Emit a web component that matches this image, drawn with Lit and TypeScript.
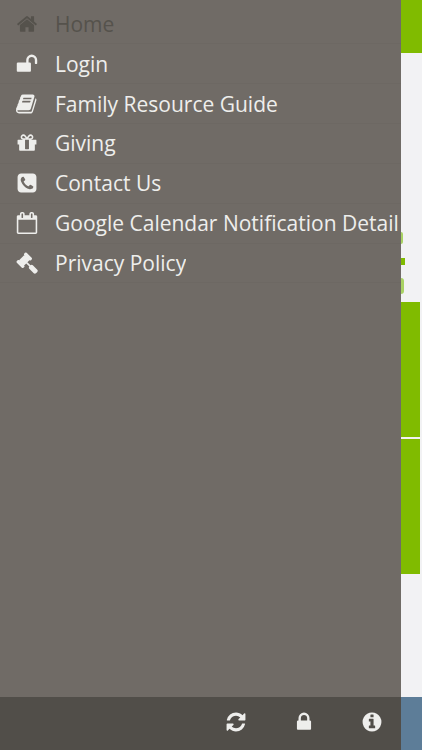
import { LitElement, html, css, svg } from "lit";
import { customElement } from "lit/decorators.js";

const P: Record<string, string> = {
  home: "M1472 992v480q0 26-19 45t-45 19h-384v-384h-256v384h-384q-26 0-45-19t-19-45v-480q0-1 .5-3t.5-3l575-474 575 474q1 2 1 6zm223-69l-62 74q-8 9-21 11h-3q-13 0-21-7l-692-577-692 577q-12 8-24 7-13-2-21-11l-62-74q-8-10-7-23.500t11-21.500l719-599q32-26 76-26t76 26l244 204v-195q0-14 9-23t23-9h192q14 0 23 9t9 23v408l219 182q10 8 11 21.500t-7 23.500z",
  unlock: "M1728 576v256q0 26-19 45t-45 19h-64q-26 0-45-19t-19-45v-256q0-106-75-181t-181-75-181 75-75 181v192h96q40 0 68 28t28 68v576q0 40-28 68t-68 28h-960q-40 0-68-28t-28-68v-576q0-40 28-68t68-28h672v-192q0-185 131.500-316.500t316.500-131.500 316.500 131.500 131.500 316.500z",
  book: "M1639 478q40 57 18 129l-275 906q-19 64-76.500 107.500t-122.500 43.500h-923q-77 0-148.500-53.500t-99.500-131.500q-24-67-2-127 0-4 3-27t4-37q1-8-3-21.500t-3-19.500q2-11 8-21t16.500-23.500 16.500-23.500q23-38 45-91.500t30-91.500q3-10 .5-30t-.5-28q3-11 17-28t17-23q21-36 42-92t25-90q1-9-2.500-32t.5-28q4-13 22-30.500t22-22.500q19-26 42.500-84.500t27.500-96.500q1-8-3-25.500t-2-26.500q2-8 9-18t18-23 17-21q8-12 16.500-30.500t15-35 16-36 19.500-32 26.500-23.500 36-11.500 47.500 5.500l-1 3q38-9 51-9h761q74 0 114 56t18 130l-274 906q-36 119-71.500 153.500t-128.500 34.500h-869q-27 0-38 15-11 16-1 43 24 70 144 70h923q29 0 56-15.500t35-41.500l300-987q7-22 5-57 38 15 59 43zm-1064 2q-4 13 2 22.500t20 9.500h608q13 0 25.500-9.500t16.500-22.500l21-64q4-13-2-22.500t-20-9.500h-608q-13 0-25.500 9.500t-16.500 22.500zm-83 256q-4 13 2 22.500t20 9.500h608q13 0 25.500-9.500t16.500-22.500l21-64q4-13-2-22.500t-20-9.500h-608q-13 0-25.500 9.500t-16.500 22.500z",
  gift: "M1056 1356v-716h-320v716q0 25 18 38.500t46 13.500h192q28 0 46-13.500t18-38.500zm-456-844h195l-126-161q-26-31-69-31-40 0-68 28t-28 68 28 68 68 28zm688-96q0-40-28-68t-68-28q-43 0-69 31l-125 161h194q40 0 68-28t28-68zm376 256v320q0 14-9 23t-23 9h-96v416q0 40-28 68t-68 28h-1088q-40 0-68-28t-28-68v-416h-96q-14 0-23-9t-9-23v-320q0-14 9-23t23-9h440q-93 0-158.500-65.500t-65.500-158.500 65.500-158.500 158.500-65.500q107 0 168 77l128 165 128-165q61-77 168-77 93 0 158.500 65.500t65.500 158.500-65.500 158.500-158.500 65.500h440q14 0 23 9t9 23z",
  phone: "M1408 1193q0-11-2-16t-18-16.500-40.500-25-47.500-26.500-45.500-25-28.500-15q-5-3-19-13t-25-15-21-5q-15 0-36.500 20.500t-39.500 45-38.500 45-33.500 20.500q-7 0-16.500-3.500t-15.500-6.500-17-9.500-14-8.500q-99-55-170-126.500t-127-170.500q-2-3-8.500-14t-9.500-17-6.500-15.500-3.500-16.500q0-13 20.500-33.500t45-38.500 45-39.500 20.500-36.500q0-10-5-21t-15-25-13-19q-3-6-15-28.500t-25-45.500-26.500-47.500-25-40.500-16.500-18-16-2q-48 0-101 22-46 21-80 94.500t-34 130.500q0 16 2.500 34t5 30.500 9 33 10 29.500 12.500 33 11 30q60 164 216.500 320.500t320.500 216.500q6 2 30 11t33 12.500 29.500 10 33 9 30.500 5 34 2.500q57 0 130.500-34t94.500-80q22-53 22-101zm256-777v960q0 119-84.500 203.500t-203.500 84.500h-960q-119 0-203.500-84.500t-84.500-203.500v-960q0-119 84.500-203.500t203.500-84.500h960q119 0 203.500 84.500t84.500 203.500z",
  calendar: "M192 1664h1408v-1024h-1408v1024zm384-1216v-288q0-14-9-23t-23-9h-64q-14 0-23 9t-9 23v288q0 14 9 23t23 9h64q14 0 23-9t9-23zm768 0v-288q0-14-9-23t-23-9h-64q-14 0-23 9t-9 23v288q0 14 9 23t23 9h64q14 0 23-9t9-23zm384-64v1280q0 52-38 90t-90 38h-1408q-52 0-90-38t-38-90v-1280q0-52 38-90t90-38h128v-96q0-66 47-113t113-47h64q66 0 113 47t47 113v96h384v-96q0-66 47-113t113-47h64q66 0 113 47t47 113v96h128q52 0 90 38t38 90z",
  gavel: "M1771 1536q0 53-37 90l-107 108q-39 37-91 37-53 0-90-37l-363-364q-38-36-38-90 0-53 43-96l-256-256-126 126q-14 14-34 14t-34-14q2 2 12.500 12t12.500 13 10 11.500 10 13.500 6 13.500 5.500 16.500 1.500 18q0 38-28 68-3 3-16.500 18t-19 20.500-18.500 16.500-22 15.500-22 9-26 4.500q-40 0-68-28l-408-408q-28-28-28-68 0-13 4.500-26t9-22 15.500-22 16.500-18.500 20.500-19 18-16.500q30-28 68-28 10 0 18 1.500t16.500 5.500 13.500 6 13.500 10 11.500 10 13 12.500 12 12.500q-14-14-14-34t14-34l348-348q14-14 34-14t34 14q-2-2-12.500-12t-12.500-13-10-11.500-10-13.500-6-13.500-5.500-16.500-1.500-18q0-38 28-68 3-3 16.500-18t19-20.500 18.500-16.500 22-15.500 22-9 26-4.500q40 0 68 28l408 408q28 28 28 68 0 13-4.500 26t-9 22-15.500 22-16.500 18.500-20.500 19-18 16.500q-30 28-68 28-10 0-18-1.500t-16.500-5.500-13.500-6-13.500-10-11.500-10-13-12.500-12-12.500q14 14 14 34t-14 34l-126 126 256 256q43-43 96-43 52 0 91 37l363 363q37 39 37 91z",
  refresh: "M1639 1056q0 5-1 7-64 268-268 434.500t-478 166.500q-146 0-282.500-55t-243.500-157l-129 129q-19 19-45 19t-45-19-19-45v-448q0-26 19-45t45-19h448q26 0 45 19t19 45-19 45l-137 137q71 66 161 102t187 36q134 0 250-65t186-179q11-17 53-117 8-23 30-23h192q13 0 22.500 9.500t9.500 22.500zm25-800v448q0 26-19 45t-45 19h-448q-26 0-45-19t-19-45 19-45l138-138q-148-137-349-137-134 0-250 65t-186 179q-11 17-53 117-8 23-30 23h-199q-13 0-22.500-9.500t-9.500-22.500v-7q65-268 270-434.500t480-166.500q146 0 284 55.500t245 156.500l130-129q19-19 45-19t45 19 19 45z",
  lock: "M640 768h512v-192q0-106-75-181t-181-75-181 75-75 181v192zm832 96v576q0 40-28 68t-68 28h-960q-40 0-68-28t-28-68v-576q0-40 28-68t68-28h32v-192q0-184 132-316t316-132 316 132 132 316v192h32q40 0 68 28t28 68z",
  info: "M1152 1376v-160q0-14-9-23t-23-9h-96v-512q0-14-9-23t-23-9h-320q-14 0-23 9t-9 23v160q0 14 9 23t23 9h96v320h-96q-14 0-23 9t-9 23v160q0 14 9 23t23 9h448q14 0 23-9t9-23zm-128-896v-160q0-14-9-23t-23-9h-192q-14 0-23 9t-9 23v160q0 14 9 23t23 9h192q14 0 23-9t9-23zm640 416q0 209-103 385.500t-279.500 279.500-385.500 103-385.500-103-279.500-279.500-103-385.500 103-385.500 279.500-279.500 385.500-103 385.500 103 279.500 279.500 103 385.500z",
};

const icon = (n: string) =>
  html`<svg class="ic" viewBox="0 0 1792 1792" aria-hidden="true">${svg`<path d=${P[n]} fill="currentColor"></path>`}</svg>`;

const ITEMS: [string, string][] = [
  ["home", "Home"],
  ["unlock", "Login"],
  ["book", "Family Resource Guide"],
  ["gift", "Giving"],
  ["phone", "Contact Us"],
  ["calendar", "Google Calendar Notification Details"],
  ["gavel", "Privacy Policy"],
];

@customElement("app-root")
export class AppRoot extends LitElement {
  static styles = css`
    :host {
      display: block;
      position: relative;
      width: 422px;
      height: 750px;
      overflow: hidden;
      font-family: "Open Sans", sans-serif;
    }
    .page {
      height: 100%;
      display: flex;
      flex-direction: column;
      background: #f2f2f4;
    }
    .top { height: 53px; background: #80bb00; }
    .main {
      flex: 1;
      padding: 249px 2px 0 0;
      display: flex;
      flex-direction: column;
      gap: 2px;
    }
    .tile { height: 135px; background: #80bb00; }
    .foot { height: 53px; background: #5d7d98; }
    .marks {
      position: absolute;
      left: 401px;
      top: 232px;
      width: 4px;
      height: 62px;
      display: flex;
      flex-direction: column;
      justify-content: space-between;
    }
    .marks i { display: block; width: 2px; height: 12px; background: #a9d264; border-radius: 0 3px 3px 0; }
    .marks i:nth-child(2) { width: 4px; height: 7px; background: #80bb00; border-radius: 0; }
    .marks i:nth-child(3) { height: 16px; width: 3px; }
    .drawer {
      position: absolute;
      inset: 0 auto 0 0;
      width: 401px;
      display: flex;
      flex-direction: column;
      background: #706b66;
      color: #eeeeec;
    }
    nav { flex: 1; padding-top: 4.6px; overflow: hidden; }
    .row {
      box-sizing: border-box;
      height: 39.83px;
      display: flex;
      align-items: center;
      gap: 17.5px;
      padding: 0 2px 0 15.5px;
      font-size: 21px;
      white-space: nowrap;
      border-bottom: 1px solid rgba(0, 0, 0, 0.025);
    }
    .row span { min-width: 0; overflow: hidden; }
    .row.active { color: #55524c; }
    .ic { width: 22px; height: 22px; flex: none; display: block; }
    .bar {
      height: 50px;
      padding: 0 18px 3px 0;
      background: #514e49;
      display: flex;
      align-items: center;
      justify-content: flex-end;
      gap: 46px;
    }
    .bar .ic { color: #eeeeec; }
  `;

  render() {
    return html`
      <div class="page">
        <div class="top"></div>
        <div class="main"><div class="tile"></div><div class="tile"></div></div>
        <div class="foot"></div>
      </div>
      <div class="marks"><i></i><i></i><i></i></div>
      <div class="drawer">
        <nav>
          ${ITEMS.map(
            ([i, t], k) => html`<div class="row ${k === 0 ? "active" : ""}">${icon(i)}<span>${t}</span></div>`
          )}
        </nav>
        <div class="bar">${icon("refresh")}${icon("lock")}${icon("info")}</div>
      </div>
    `;
  }
}
